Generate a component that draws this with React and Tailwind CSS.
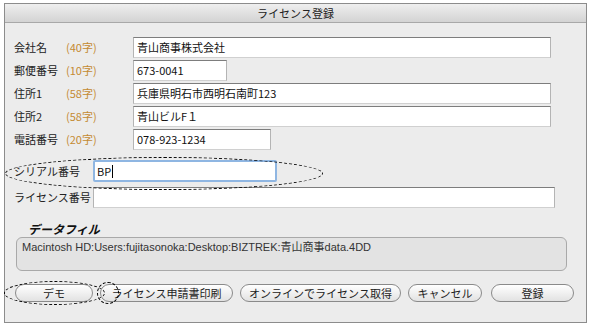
import React from 'react'

const FONT = { fontFamily: '"Noto Sans CJK JP", "Liberation Sans", sans-serif' }

// one line of the address form: label, length hint, text box
function Row({ label, note, value, width }) {
  return (
    <div className="flex h-[21px] items-center">
      <span className="w-[52px] text-[11px] text-[#222]">{label}</span>
      <span className="w-[67px] text-[11px] text-[#c48a32]">{note}</span>
      <div
        className={`flex h-[21px] items-center border border-t-[#7d7d7d] border-x-[#b4b4b4] border-b-[#d0d0d0] bg-white pl-[3px] text-[11px] text-[#111] ${width}`}
      >
        {value}
      </div>
    </div>
  )
}

function Btn({ children, width }) {
  return (
    <div
      className={`flex h-[18px] items-center justify-center rounded-full border border-[#8a8a8a] bg-gradient-to-b from-white to-[#e2e2e2] text-[11px] text-[#222] ${width}`}
    >
      {children}
    </div>
  )
}

export default function App() {
  return (
    <div className="h-[327px] w-[590px] bg-white pl-[4px] pt-[3px]" style={FONT}>
      <div className="relative h-[320px] w-[583px] border border-[#8c8c8c] bg-[#ececec]">
        {/* title bar */}
        <div className="flex h-[19px] items-center justify-center border-b border-[#a8a8a8] bg-gradient-to-b from-[#efefef] to-[#d3d3d3] text-[11px] text-[#222]">
          ライセンス登録
        </div>

        <div className="flex flex-col gap-[2px] pl-[9px] pt-[14px]">
          <Row label="会社名" note="(40字)" value="青山商事株式会社" width="w-[418px]" />
          <Row label="郵便番号" note="(10字)" value="673-0041" width="w-[94px]" />
          <Row label="住所1" note="(58字)" value="兵庫県明石市西明石南町123" width="w-[418px]" />
          <Row label="住所2" note="(58字)" value="青山ビルF１" width="w-[418px]" />
          <Row label="電話番号" note="(20字)" value="078-923-1234" width="w-[138px]" />
        </div>

        <div className="mt-[10px] flex h-[22px] items-center pl-[9px]">
          <span className="w-[79px] text-[11px] text-[#222]">シリアル番号</span>
          <div className="flex h-[22px] w-[184px] items-center rounded-[2px] border-2 border-[#8fb6e2] bg-white pl-[2px] text-[11px] text-[#111]">
            BP<span className="ml-[1px] h-[13px] w-px bg-black" />
          </div>
        </div>

        <div className="mt-[5px] flex h-[21px] items-center pl-[9px]">
          <span className="w-[79px] text-[11px] text-[#222]">ライセンス番号</span>
          <div className="h-[21px] w-[462px] border border-t-[#7d7d7d] border-x-[#b4b4b4] border-b-[#d0d0d0] bg-white" />
        </div>

        <div className="mt-[13px] pl-[23px] text-[12px] font-bold italic leading-[15px] text-[#111]">データフィル</div>
        <div
          className="ml-[11px] mt-[1px] h-[34px] w-[551px] rounded-[6px] border border-[#a9a9a9] bg-[#e3e3e3] px-[5px] pt-[2px] text-[11px] leading-[14px] text-[#333]"
          style={{ fontFamily: '"Liberation Sans", "Noto Sans CJK JP", sans-serif' }}
        >
          Macintosh HD:Users:fujitasonoka:Desktop:BIZTREK:青山商事data.4DD
        </div>

        <div className="ml-[10px] mt-[13px] flex items-center gap-[7px]">
          <Btn width="w-[78px]">デモ</Btn>
          <Btn width="w-[133px]">ライセンス申請書印刷</Btn>
          <Btn width="w-[161px]">オンラインでライセンス取得</Btn>
          <Btn width="w-[74px]">キャンセル</Btn>
          <div className="ml-[2px]">
            <Btn width="w-[83px]">登録</Btn>
          </div>
        </div>

        {/* dashed annotation ellipses */}
        <div className="pointer-events-none absolute left-[0px] top-[153px] h-[33px] w-[318px] rounded-[50%] border border-dashed border-black" />
        <div className="pointer-events-none absolute left-[-1px] top-[277px] h-[24px] w-[101px] rounded-[50%] border border-dashed border-black" />
        <div className="pointer-events-none absolute left-[92px] top-[278px] h-[22px] w-[22px] rounded-[50%] border border-dashed border-black" />
      </div>
    </div>
  )
}
